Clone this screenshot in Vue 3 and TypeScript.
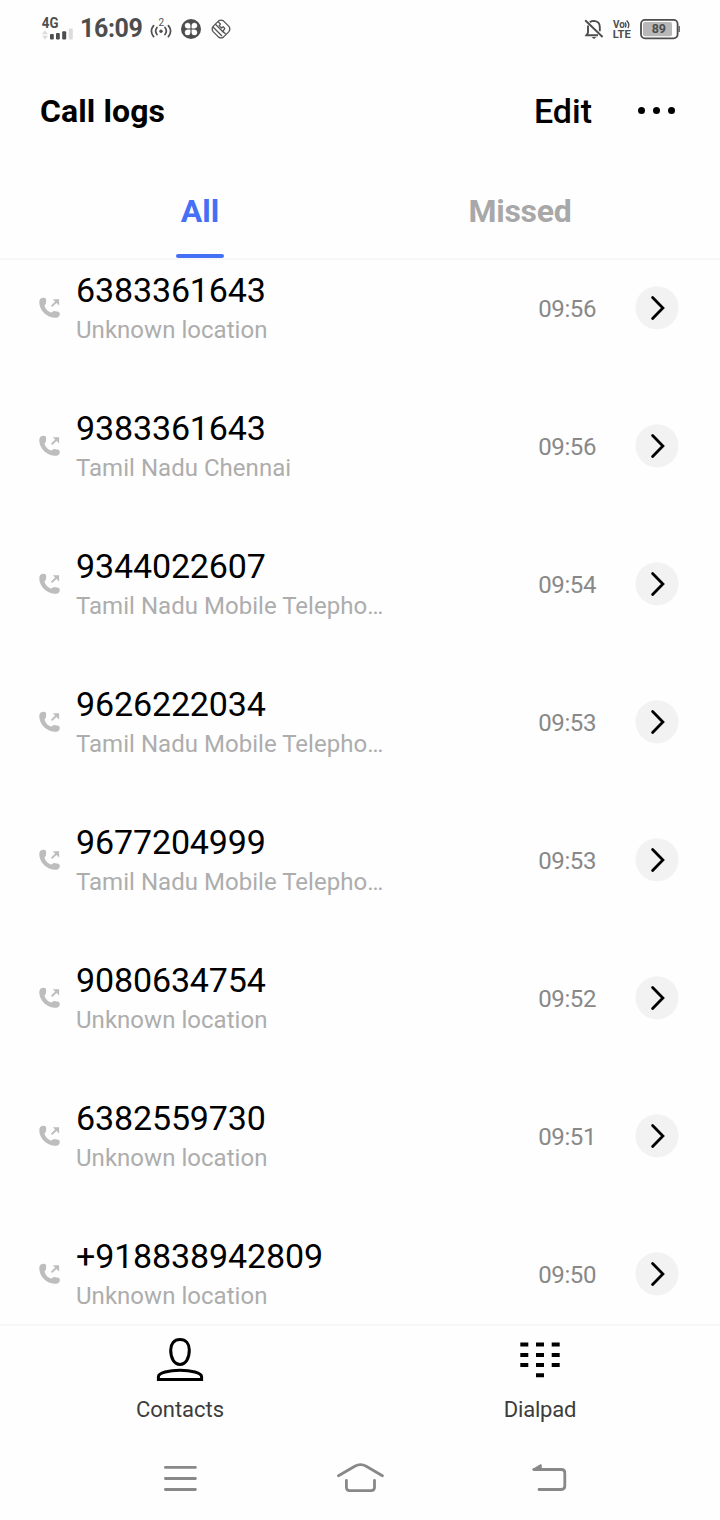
<script setup lang="ts">
interface CallEntry {
  number: string
  location: string
  time: string
}

const calls: CallEntry[] = [
  { number: '6383361643', location: 'Unknown location', time: '09:56' },
  { number: '9383361643', location: 'Tamil Nadu Chennai', time: '09:56' },
  { number: '9344022607', location: 'Tamil Nadu Mobile Telepho…', time: '09:54' },
  { number: '9626222034', location: 'Tamil Nadu Mobile Telepho…', time: '09:53' },
  { number: '9677204999', location: 'Tamil Nadu Mobile Telepho…', time: '09:53' },
  { number: '9080634754', location: 'Unknown location', time: '09:52' },
  { number: '6382559730', location: 'Unknown location', time: '09:51' },
  { number: '+918838942809', location: 'Unknown location', time: '09:50' },
]
</script>

<template>
  <div class="phone">
    <div class="status">
      <div class="status-left">
        <svg class="signal" width="36" height="28" viewBox="0 0 36 28">
          <text x="1.8" y="13.2" class="net" textLength="16.6" lengthAdjust="spacingAndGlyphs">4G</text>
          <path d="M2 19.2 5 15.2 8 19.2zM2 20.8h6l-3 3.8z" fill="#dcdcdc" />
          <g fill="#4d4d4d">
            <rect x="10" y="19" width="3.8" height="5.6" rx="1" />
            <rect x="16" y="18" width="3.8" height="6.6" rx="1" />
            <rect x="22.2" y="16.2" width="4" height="8.4" rx="1" />
          </g>
          <rect x="28.8" y="13.6" width="4" height="11" rx="1" fill="#dcdcdc" />
        </svg>
        <span class="clock">16:09</span>
        <svg class="hotspot" width="22" height="26" viewBox="0 -2 22 26" fill="none" stroke="#505050" stroke-width="1.7" stroke-linecap="round">
          <path d="M3.6 7.6Q-.8 13 3.6 18.6M18.4 7.6Q22.8 13 18.4 18.6M7 9.4Q4.3 13 7 16.6M15 9.4Q17.7 13 15 16.6" />
          <circle cx="11" cy="13.2" r="1.7" fill="#505050" stroke="none" />
          <text x="11.2" y="8" class="two">2</text>
        </svg>
        <svg class="clover" width="20" height="20" viewBox="0 0 20 20">
          <circle cx="10" cy="10" r="10" fill="#4d4d4d" />
          <path
            d="M9.2 9.2H6.6A2.6 2.6 0 0 1 4 6.6A2.6 2.6 0 0 1 6.6 4A2.6 2.6 0 0 1 9.2 6.6zM10.8 9.2V6.6A2.6 2.6 0 0 1 13.4 4A2.6 2.6 0 0 1 16 6.6A2.6 2.6 0 0 1 13.4 9.2zM9.2 10.8V13.4A2.6 2.6 0 0 1 6.6 16A2.6 2.6 0 0 1 4 13.4A2.6 2.6 0 0 1 6.6 10.8zM10.8 10.8H13.4A2.6 2.6 0 0 1 16 13.4A2.6 2.6 0 0 1 13.4 16A2.6 2.6 0 0 1 10.8 13.4z"
            fill="#fff"
            stroke="#fff"
            stroke-width=".4"
          />
        </svg>
        <svg class="diamond" width="20" height="20" viewBox="0 0 20 20" fill="none" stroke="#555" stroke-width="1.3" stroke-linejoin="round">
          <path d="M7.6 1.9Q10 .2 12.4 1.9L17.9 7.4Q19.8 10 17.9 12.6L12.4 18.1Q10 19.8 7.6 18.1L2.1 12.6Q.2 10 2.1 7.4z" />
          <path d="M7 2.6 9.4 5 8.2 6.6 10.6 9 12.2 7.8 13.8 9.4 12 12.4 14.6 15M4.4 5.2 12.9 13.7M1.8 7.8 11 17" />
        </svg>
      </div>
      <div class="status-right">
        <svg class="bell" width="20" height="22" viewBox="0 0 20 22" fill="none" stroke="#4d4d4d" stroke-width="1.9">
          <path d="M1.2 2.3 18.6 19M4 7.4V14.8L2.4 17.2H14M5.8 4.2Q7.5 2.9 10 2.9Q15.8 3.4 15.8 9V13.2" />
          <path d="M7.5 18.9h5l-2.5 2.2z" fill="#4d4d4d" stroke="none" />
        </svg>
        <svg class="volte" width="20" height="22" viewBox="0 0 20 22">
          <text x="1" y="10" class="vol" textLength="11.8" lengthAdjust="spacingAndGlyphs">Vo</text>
          <path d="M13.2 4.4Q14.6 6.6 13.4 9.6M14.6 2.4Q18.5 6.2 15.8 10.2" fill="none" stroke="#4d4d4d" stroke-width="1.4" />
          <text x="0.8" y="20.3" class="lte" textLength="18" lengthAdjust="spacingAndGlyphs">LTE</text>
        </svg>
        <svg class="battery" width="40" height="22" viewBox="0 0 40 22">
          <rect x="1" y="1.9" width="36.6" height="18.4" rx="4" fill="#fff" stroke="#4d4d4d" stroke-width="1.8" />
          <rect x="3" y="3.9" width="29" height="14.4" rx="2" fill="#b8b8b8" />
          <path d="M39.2 8v6" stroke="#4d4d4d" stroke-width="1.2" />
          <text x="18.8" y="15.4" class="percent">89</text>
        </svg>
      </div>
    </div>

    <header class="header">
      <h1>Call logs</h1>
      <div class="actions">
        <span class="edit">Edit</span>
        <div class="more"><i /><i /><i /></div>
      </div>
    </header>

    <nav class="tabs">
      <div class="tab active"><span>All</span></div>
      <div class="tab"><span>Missed</span></div>
    </nav>

    <main class="list">
      <div v-for="call in calls" :key="call.number" class="row">
        <svg class="outgoing" width="22" height="22" viewBox="0 0 22 22">
          <path d="M3.1.9C5.4.3 7.1.9 7.2 2.7L7 6.3C6.9 7.4 5.6 7.8 5.6 8.8C6.2 11.9 9.3 14.9 12 15.5C13.4 15.6 13.7 14.1 15 14L19.5 14.8C21 15.4 21 17.2 20.4 18.7C19.6 20.4 17.7 20.9 15.3 20.8C7.6 20.3.6 13.7.3 5.8C.2 3.1 1.1 1.3 3.1.9z" fill="#bdbdbd" />
          <path d="M12.6 9.4 18 4" stroke="#bdbdbd" stroke-width="1.9" fill="none" />
          <path d="M13.8 2.2H20.1V8.5z" fill="#bdbdbd" />
        </svg>
        <div class="info">
          <div class="number">{{ call.number }}</div>
          <div class="location">{{ call.location }}</div>
        </div>
        <span class="time">{{ call.time }}</span>
        <svg class="detail" width="44" height="44" viewBox="0 0 44 44">
          <circle cx="22" cy="21.8" r="21.5" fill="#f2f2f2" />
          <path d="M17.6 11.4 27.9 22 17.6 32.6" fill="none" stroke="#000" stroke-width="2.8" stroke-linecap="round" />
        </svg>
      </div>
    </main>

    <footer class="bottom">
      <div class="item">
        <svg width="48" height="46" viewBox="0 0 48 46" fill="none" stroke="#000" stroke-width="3">
          <path d="M24 2.6C30 2.6 33.3 7 33.3 13C33.3 21.5 29.7 27.4 24 27.4S14.7 21.5 14.7 13C14.7 7 18 2.6 24 2.6z" />
          <path d="M2.4 42.5V39.7C2.4 36 13 33.2 24 33.2S45.6 36 45.6 39.7V42.5z" />
        </svg>
        <span>Contacts</span>
      </div>
      <div class="item dialpad">
        <svg width="48" height="46" viewBox="0 0 48 46">
          <path d="M4.3 7.5h8M20 7.5h8M35.7 7.5h8M4.3 18h8M20 18h8M35.7 18h8M4.3 28h8M20 28h8M35.7 28h8M20 38.2h8" stroke="#000" stroke-width="4" />
        </svg>
        <span>Dialpad</span>
      </div>
    </footer>

    <div class="system">
      <svg width="48" height="34" viewBox="0 0 48 34">
        <path d="M9.4 5.4h30M9.4 16.5h30M9.4 27.5h30" />
      </svg>
      <svg class="home" width="48" height="34" viewBox="0 0 48 34">
        <path d="M2.5 13.7 18.8 4.2Q24.5 1 30.2 4.2L46.4 13.7M10.4 18.3V25.3Q10.4 28.6 13.7 28.6H35.2Q38.5 28.6 38.5 25.3V18.3" />
      </svg>
      <svg width="48" height="34" viewBox="0 0 48 34">
        <path d="M9 7.5H36.4Q39.8 7.5 39.8 11V24.1Q39.8 27.5 36.4 27.5H14" />
        <path class="arrow" d="M8.4 7.5 15.8 3.2V7.5z" />
      </svg>
    </div>
  </div>
</template>

<style>
body {
  background: #fff;
}
</style>

<style scoped>
.phone {
  width: 720px;
  height: 1520px;
  display: flex;
  flex-direction: column;
  background: #fefefe;
  color: #000;
  font-family: Roboto, "Liberation Sans", sans-serif;
  overflow: hidden;
}
svg {
  display: block;
  flex: none;
}
.status {
  height: 58px;
  flex: none;
  display: flex;
  justify-content: space-between;
  align-items: center;
  padding: 0 40px;
}
.status-left,
.status-right {
  display: flex;
  align-items: center;
}
.net {
  font-size: 14px;
  font-weight: 700;
  fill: #4d4d4d;
}
.clock {
  width: 65px;
  margin-left: 4px;
  font-size: 25px;
  line-height: 30px;
  font-weight: 700;
  letter-spacing: -0.4px;
  color: #4d4d4d;
}
.hotspot {
  margin-left: 5px;
}
.two {
  font-size: 10px;
  text-anchor: middle;
  fill: #505050;
  stroke: none;
}
.clover {
  margin-left: 9px;
}
.diamond {
  margin-left: 10px;
}
.volte {
  margin-left: 8px;
}
.vol {
  font-size: 10px;
  font-weight: 700;
  fill: #4d4d4d;
}
.lte {
  font-size: 10.5px;
  font-weight: 700;
  fill: #4d4d4d;
}
.battery {
  margin-left: 8px;
}
.percent {
  font-size: 12.5px;
  font-weight: 700;
  text-anchor: middle;
  fill: #4d4d4d;
}
.header {
  height: 104px;
  flex: none;
  display: flex;
  align-items: center;
  justify-content: space-between;
  padding: 0 45px 0 40px;
}
h1 {
  margin: 2px 0 0;
  font-size: 32px;
  line-height: 40px;
  font-weight: 700;
  letter-spacing: 0.1px;
}
.actions {
  display: flex;
  align-items: center;
}
.edit {
  margin-top: 2px;
  font-size: 34px;
  line-height: 40px;
  font-weight: 500;
}
.more {
  display: flex;
  gap: 8px;
  margin-left: 46px;
}
.more i {
  width: 7px;
  height: 7px;
  border-radius: 50%;
  background: #000;
}
.tabs {
  height: 96px;
  flex: none;
  display: flex;
  border-bottom: 2px solid #f7f7f7;
}
.tab {
  flex: 1;
  position: relative;
  display: flex;
  justify-content: center;
  color: #a8a8a8;
  font-size: 32px;
  line-height: 40px;
  font-weight: 700;
  padding-top: 29px;
}
.tab:first-child {
  padding-left: 40px;
}
.tab:last-child {
  padding-right: 40px;
  letter-spacing: -0.3px;
}
.tab.active {
  color: #456ff5;
}
.tab.active::after {
  content: "";
  position: absolute;
  left: 176px;
  bottom: 0;
  width: 48px;
  height: 4px;
  border-radius: 2px;
  background: #456ff5;
}
.list {
  height: 1064px;
  flex: none;
  overflow: hidden;
}
.row {
  height: 138px;
  display: flex;
  align-items: center;
  padding: 0 41px 0 39px;
}
.row:first-child {
  margin-top: -21px;
}
.info {
  flex: 1;
  margin-left: 15px;
}
.number {
  font-size: 34px;
  line-height: 42px;
  letter-spacing: -0.13px;
}
.location {
  font-size: 24px;
  line-height: 36px;
  padding-top: 1px;
  margin-bottom: -1px;
  color: #adadad;
  letter-spacing: 0.03px;
}
.time {
  font-size: 24px;
  color: #888;
  margin: 2px 39px 0 0;
  letter-spacing: -0.4px;
}
.bottom {
  height: 114px;
  flex: none;
  display: flex;
  border-top: 2px solid #f7f7f7;
}
.item {
  flex: 1;
  display: flex;
  flex-direction: column;
  align-items: center;
  padding-top: 11px;
  font-size: 22px;
  line-height: 28px;
  color: #3c3c3c;
}
.item span {
  margin-top: 13px;
}
.dialpad span {
  letter-spacing: -0.2px;
}
.system {
  flex: 1;
  display: flex;
  justify-content: space-between;
  padding: 22px 147px 0 156px;
}
.home {
  margin-right: 9px;
}
.system path {
  fill: none;
  stroke: #888;
  stroke-width: 2.8;
  stroke-linecap: round;
}
.system .arrow {
  fill: #888;
  stroke-width: 2;
  stroke-linejoin: round;
}
</style>
